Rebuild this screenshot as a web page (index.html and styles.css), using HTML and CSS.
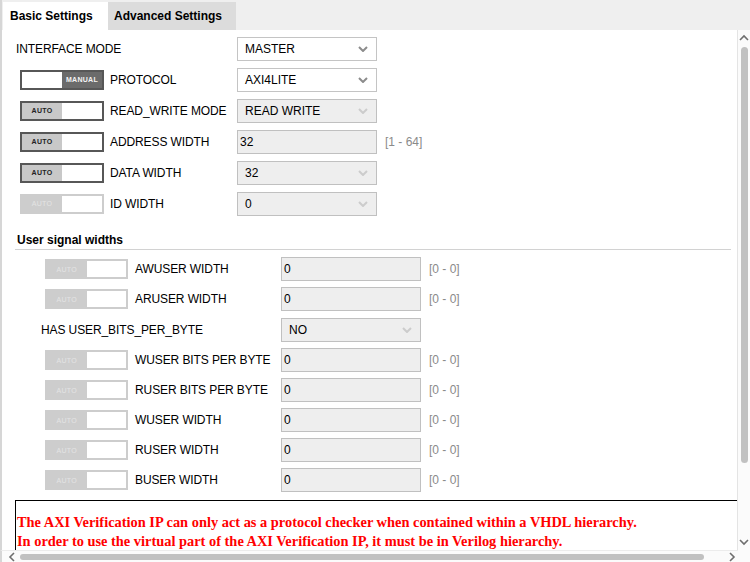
FILE: index.html
```html
<!DOCTYPE html>
<html>
<head>
<meta charset="utf-8">
<link rel="stylesheet" href="styles.css">
</head>
<body>
<div class="app">
  <div class="tabs">
    <div class="tab active">Basic Settings</div>
    <div class="tab adv">Advanced Settings</div>
  </div>
  <div class="body">
    <div class="viewport">
      <div class="content">
        <div class="row">
          <div class="lead"><span class="label">INTERFACE MODE</span></div>
          <div class="sel"><span>MASTER</span><svg class="chev" width="10" height="6" viewBox="0 0 10 6"><path d="M1 1 L5 5 L9 1" /></svg></div>
        </div>
        <div class="row">
          <div class="lead tg"><div class="toggle manual"><span class="half"></span><span class="half on">MANUAL</span></div><span class="label">PROTOCOL</span></div>
          <div class="sel"><span>AXI4LITE</span><svg class="chev" width="10" height="6" viewBox="0 0 10 6"><path d="M1 1 L5 5 L9 1" /></svg></div>
        </div>
        <div class="row">
          <div class="lead tg"><div class="toggle auto"><span class="half on">AUTO</span><span class="half"></span></div><span class="label">READ_WRITE MODE</span></div>
          <div class="sel ro"><span>READ WRITE</span><svg class="chev" width="10" height="6" viewBox="0 0 10 6"><path d="M1 1 L5 5 L9 1" /></svg></div>
        </div>
        <div class="row">
          <div class="lead tg"><div class="toggle auto"><span class="half on">AUTO</span><span class="half"></span></div><span class="label">ADDRESS WIDTH</span></div>
          <div class="inp">32</div><span class="hint">[1 - 64]</span>
        </div>
        <div class="row">
          <div class="lead tg"><div class="toggle auto"><span class="half on">AUTO</span><span class="half"></span></div><span class="label">DATA WIDTH</span></div>
          <div class="sel ro"><span>32</span><svg class="chev" width="10" height="6" viewBox="0 0 10 6"><path d="M1 1 L5 5 L9 1" /></svg></div>
        </div>
        <div class="row">
          <div class="lead tg"><div class="toggle dis"><span class="half on">AUTO</span><span class="half"></span></div><span class="label">ID WIDTH</span></div>
          <div class="sel ro"><span>0</span><svg class="chev" width="10" height="6" viewBox="0 0 10 6"><path d="M1 1 L5 5 L9 1" /></svg></div>
        </div>

        <div class="sec">User signal widths</div>

        <div class="subrows">
          <div class="row sub">
            <div class="lead tg"><div class="toggle dis"><span class="half on">AUTO</span><span class="half"></span></div><span class="label">AWUSER WIDTH</span></div>
            <div class="inp">0</div><span class="hint">[0 - 0]</span>
          </div>
          <div class="row sub">
            <div class="lead tg"><div class="toggle dis"><span class="half on">AUTO</span><span class="half"></span></div><span class="label">ARUSER WIDTH</span></div>
            <div class="inp">0</div><span class="hint">[0 - 0]</span>
          </div>
          <div class="row sub has">
            <div class="lead plain"><span class="label">HAS USER_BITS_PER_BYTE</span></div>
            <div class="sel ro"><span>NO</span><svg class="chev" width="10" height="6" viewBox="0 0 10 6"><path d="M1 1 L5 5 L9 1" /></svg></div>
          </div>
          <div class="row sub">
            <div class="lead tg"><div class="toggle dis"><span class="half on">AUTO</span><span class="half"></span></div><span class="label">WUSER BITS PER BYTE</span></div>
            <div class="inp">0</div><span class="hint">[0 - 0]</span>
          </div>
          <div class="row sub">
            <div class="lead tg"><div class="toggle dis"><span class="half on">AUTO</span><span class="half"></span></div><span class="label">RUSER BITS PER BYTE</span></div>
            <div class="inp">0</div><span class="hint">[0 - 0]</span>
          </div>
          <div class="row sub">
            <div class="lead tg"><div class="toggle dis"><span class="half on">AUTO</span><span class="half"></span></div><span class="label">WUSER WIDTH</span></div>
            <div class="inp">0</div><span class="hint">[0 - 0]</span>
          </div>
          <div class="row sub">
            <div class="lead tg"><div class="toggle dis"><span class="half on">AUTO</span><span class="half"></span></div><span class="label">RUSER WIDTH</span></div>
            <div class="inp">0</div><span class="hint">[0 - 0]</span>
          </div>
          <div class="row sub">
            <div class="lead tg"><div class="toggle dis"><span class="half on">AUTO</span><span class="half"></span></div><span class="label">BUSER WIDTH</span></div>
            <div class="inp">0</div><span class="hint">[0 - 0]</span>
          </div>
        </div>

        <div class="msg">
          <div>The AXI Verification IP can only act as a protocol checker when contained within a VHDL hierarchy.</div>
          <div>In order to use the virtual part of the AXI Verification IP, it must be in Verilog hierarchy.</div>
        </div>
      </div>
    </div>
    <div class="vscroll">
      <svg class="arrow" width="10" height="8" viewBox="0 0 10 8"><path d="M1 6 L5 2 L9 6" /></svg>
      <div class="vtrack"><div class="vthumb"></div></div>
      <svg class="arrow" width="10" height="8" viewBox="0 0 10 8"><path d="M1 2 L5 6 L9 2" /></svg>
    </div>
  </div>
  <div class="hscroll">
    <div class="hbar">
      <svg class="arrow" width="8" height="10" viewBox="0 0 8 10"><path d="M6 1 L2 5 L6 9" /></svg>
      <div class="htrack"><div class="hthumb"></div></div>
      <svg class="arrow" width="8" height="10" viewBox="0 0 8 10"><path d="M2 1 L6 5 L2 9" /></svg>
    </div>
    <div class="corner"></div>
  </div>
</div>
</body>
</html>
```

FILE: styles.css
```css
html, body {
  margin: 0;
  padding: 0;
  background: #fff;
}
body {
  font-family: "Liberation Sans", Arial, sans-serif;
  font-size: 12px;
  color: #000;
}
.app {
  width: 750px;
  height: 562px;
  display: flex;
  flex-direction: column;
  overflow: hidden;
}
.tabs {
  height: 30px;
  box-sizing: border-box;
  background: #efefef;
  border-left: 2px solid #d6d6d6;
  padding-left: 1px;
  display: flex;
  align-items: flex-end;
}
.tab {
  height: 28px;
  line-height: 28px;
  font-weight: bold;
  box-sizing: border-box;
}
.tab.active {
  width: 105px;
  padding-left: 7px;
  background: #fff;
}
.tab.adv {
  width: 128px;
  padding-left: 6px;
  background: #dcdcdc;
}
.body {
  height: 520px;
  display: flex;
}
.viewport {
  width: 735px;
  border-left: 2px solid #d6d6d6;
  overflow: hidden;
}
.content {
  width: 760px;
  padding: 3px 0 0 14px;
}
.row {
  height: 31px;
  display: flex;
  align-items: center;
}
.lead {
  width: 221px;
  display: flex;
  align-items: center;
  white-space: nowrap;
  letter-spacing: -0.1px;
}
.lead.tg {
  padding-left: 4px;
  box-sizing: border-box;
}
.toggle {
  width: 84px;
  height: 20px;
  box-sizing: border-box;
  border: 2px solid #575757;
  display: flex;
  margin-right: 6px;
  background: #fff;
  letter-spacing: 0.3px;
}
.toggle .half {
  flex: 1;
  display: flex;
  align-items: center;
  justify-content: center;
  font-size: 7px;
  font-weight: bold;
}
.toggle.manual .half.on {
  background: #6b6b6b;
  color: #f4f4f4;
}
.toggle.auto .half.on {
  background: #c8c8c8;
  color: #222;
}
.toggle.dis {
  border-color: #cdcdcd;
}
.toggle.dis .half.on {
  background: #cdcdcd;
  color: #e4e4e4;
  font-weight: normal;
}
.sel, .inp {
  width: 140px;
  height: 24px;
  box-sizing: border-box;
  border: 1px solid #c4c4c4;
  display: flex;
  align-items: center;
  background: #fff;
}
.sel {
  justify-content: space-between;
  padding: 0 8px 0 7px;
}
.sel.ro {
  background: #eeeeee;
  border-color: #c0c0c0;
}
.inp {
  background: #eeeeee;
  border-color: #c0c0c0;
  padding-left: 2px;
}
.chev path {
  fill: none;
  stroke: #8c8c8c;
  stroke-width: 2;
}
.sel.ro .chev path {
  stroke: #cccccc;
}
.hint {
  margin-left: 8px;
  color: #8a8a8a;
}
.sec {
  width: 716px;
  margin-left: -1px;
  padding: 14px 0 2px 2px;
  box-sizing: border-box;
  line-height: 14px;
  font-weight: bold;
  border-bottom: 1px solid #d2d2d2;
}
.subrows {
  padding-top: 4px;
}
.row.sub {
  height: 30px;
}
.row.sub.has {
  height: 31px;
}
.sub .lead {
  width: 265px;
}
.sub .lead.tg {
  padding-left: 29px;
}
.sub .toggle {
  width: 83px;
  margin-right: 7px;
}
.sub .lead.plain {
  padding-left: 25px;
  box-sizing: border-box;
}
.msg {
  margin-top: 5px;
  margin-left: -1px;
  width: 760px;
  border: 1px solid #000;
  padding: 12px 0 0 1px;
  font-family: "Liberation Serif", "Times New Roman", serif;
  font-weight: bold;
  font-size: 14.4px;
  line-height: 19px;
  color: #ff0000;
  white-space: nowrap;
  height: 60px;
}
.vscroll {
  width: 12px;
  border-left: 1px solid #e4e4e4;
  background: #fbfbfb;
  display: flex;
  flex-direction: column;
  align-items: center;
}
.arrow path {
  fill: none;
  stroke: #6e6e6e;
  stroke-width: 1.6;
}
.vscroll .arrow {
  margin: 4px 0;
}
.vtrack {
  flex: 1;
  width: 100%;
  display: flex;
  justify-content: center;
}
.vthumb {
  width: 7px;
  height: 416px;
  margin-top: 1px;
  border-radius: 4px;
  background: #c1c1c1;
}
.hscroll {
  height: 12px;
  display: flex;
  background: #fbfbfb;
}
.hbar {
  width: 738px;
  display: flex;
  align-items: center;
  border-left: 2px solid #d6d6d6;
  border-top: 1px solid #ececec;
  box-sizing: border-box;
  padding: 0 2px 0 6px;
}
.htrack {
  flex: 1;
  display: flex;
  padding: 0 4px;
}
.hthumb {
  width: 684px;
  height: 6px;
  border-radius: 3px;
  background: #c1c1c1;
}
.corner {
  width: 12px;
  background: #fbfbfb;
}
```
